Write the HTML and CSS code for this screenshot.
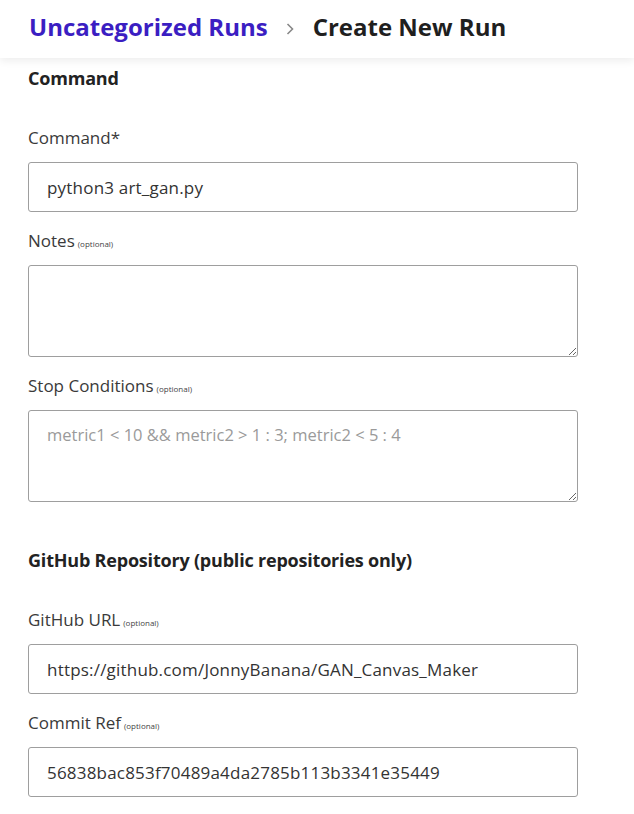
FILE: index.html
```html
<!DOCTYPE html>
<html>
<head>
<meta charset="utf-8">
<link rel="stylesheet" href="styles.css">
</head>
<body>
<header class="topbar">
  <a class="crumb-link" href="#">Uncategorized Runs</a>
  <svg class="chev" width="10" height="14" viewBox="0 0 10 14"><path d="M2.5 2 L7.5 7 L2.5 12" fill="none" stroke="#888" stroke-width="1.6"/></svg>
  <span class="crumb-current">Create New Run</span>
</header>
<main class="content">
  <section class="section">
    <h2 class="section-title">Command</h2>
    <div class="field">
      <label class="label">Command*</label>
      <input class="input" type="text" value="python3 art_gan.py">
    </div>
    <div class="field">
      <label class="label">Notes<span class="opt">(optional)</span></label>
      <textarea class="input area"></textarea>
    </div>
    <div class="field">
      <label class="label">Stop Conditions<span class="opt">(optional)</span></label>
      <textarea class="input area" placeholder="metric1 < 10 && metric2 > 1 : 3; metric2 < 5 : 4"></textarea>
    </div>
  </section>
  <section class="section second">
    <h2 class="section-title">GitHub Repository (public repositories only)</h2>
    <div class="field">
      <label class="label">GitHub URL<span class="opt">(optional)</span></label>
      <input class="input" type="text" value="https://github.com/JonnyBanana/GAN_Canvas_Maker">
    </div>
    <div class="field">
      <label class="label">Commit Ref<span class="opt">(optional)</span></label>
      <input class="input" type="text" value="56838bac853f70489a4da2785b113b3341e35449">
    </div>
  </section>
</main>
</body>
</html>
```
FILE: styles.css
```css
html, body {
  margin: 0;
  padding: 0;
  background: #fff;
  font-family: "Open Sans", Lato, sans-serif;
  color: #222;
  overflow: hidden;
}
.topbar {
  box-sizing: border-box;
  height: 58px;
  display: flex;
  align-items: center;
  padding: 0 0 5px 29px;
  box-shadow: 0 3px 8px rgba(0, 0, 0, 0.07);
  position: relative;
  background: #fff;
}
.crumb-link {
  color: #3b1ec2;
  font-size: 24px;
  font-weight: 700;
  text-decoration: none;
}
.chev {
  margin: 4px 18px 0 17px;
}
.crumb-current {
  color: #1f1f1f;
  font-size: 24px;
  font-weight: 700;
}
.content {
  padding: 8px 0 0 28px;
}
.section-title {
  margin: 0 0 38px;
  font-size: 18px;
  line-height: 24px;
  font-weight: 700;
  color: #222;
  letter-spacing: -0.2px;
}
.second {
  margin-top: 46px;
}
.field {
  display: flex;
  flex-direction: column;
  margin-bottom: 19px;
}
.label {
  display: block;
  height: 20px;
  font-size: 17px;
  line-height: 20px;
  color: #3a3a3a;
  margin-bottom: 14px;
}
.opt {
  font-size: 8px;
  line-height: 0;
  margin-left: 3px;
  color: #444;
}
.input {
  box-sizing: border-box;
  width: 550px;
  height: 50px;
  border: 1px solid #9e9e9e;
  border-radius: 3px;
  padding: 0 18px;
  font-family: "Open Sans", Lato, sans-serif;
  font-size: 17px;
  letter-spacing: 0.2px;
  color: #333;
  background: #fff;
  outline: none;
  margin: 0;
}
.area {
  height: 92px;
  padding: 13px 18px;
  resize: vertical;
  line-height: 22px;
}
.area::placeholder {
  color: #9a9a9a;
  font-size: 16.5px;
  letter-spacing: 0;
}
```
